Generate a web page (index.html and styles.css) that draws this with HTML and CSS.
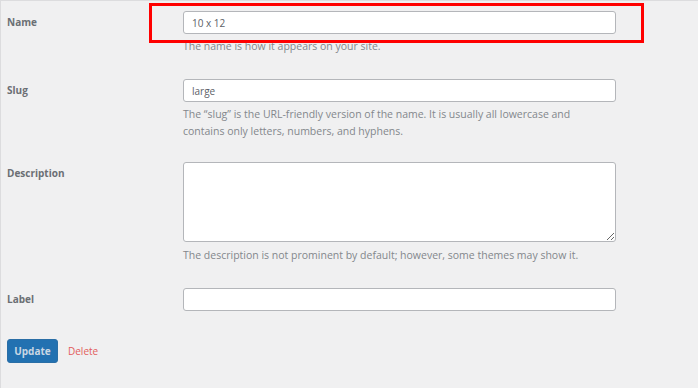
FILE: index.html
```html
<!DOCTYPE html>
<html lang="en">
<head>
  <meta charset="UTF-8" />
  <meta name="viewport" content="width=device-width, initial-scale=1.0" />
  <title>Edit Attribute Term</title>
  <link rel="stylesheet" href="styles.css">
</head>
<body>
  <div class="page">
    <form class="term-form">
      <!-- Name -->
      <div class="form-row">
        <label class="row-label" for="tag-name">Name</label>
        <div class="row-field">
          <input type="text" id="tag-name" value="10 x 12" />
          <p class="help">The name is how it appears on your site.</p>
        </div>
      </div>

      <!-- Slug -->
      <div class="form-row row-slug">
        <label class="row-label" for="tag-slug">Slug</label>
        <div class="row-field">
          <input type="text" id="tag-slug" value="large" />
          <p class="help">The &ldquo;slug&rdquo; is the URL-friendly version of the name. It is usually all lowercase and contains only letters, numbers, and hyphens.</p>
        </div>
      </div>

      <!-- Description -->
      <div class="form-row">
        <label class="row-label" for="tag-desc">Description</label>
        <div class="row-field">
          <textarea id="tag-desc"></textarea>
          <p class="help">The description is not prominent by default; however, some themes may show it.</p>
        </div>
      </div>

      <!-- Label -->
      <div class="form-row row-last">
        <label class="row-label" for="tag-label">Label</label>
        <div class="row-field">
          <input type="text" id="tag-label" value="" />
        </div>
      </div>

      <div class="actions">
        <button type="button" class="btn-update">Update</button>
        <a href="#" class="link-delete">Delete</a>
      </div>
    </form>

    <!-- highlight around the name field -->
    <div class="highlight"></div>
  </div>
</body>
</html>
```

FILE: styles.css
```css
/* Reset & Base */
*, *::before, *::after { box-sizing: border-box; margin: 0; padding: 0; }
html, body { height: 100%; }
body { font-family: 'Open Sans', 'Noto Sans', Arial, sans-serif; font-size: 10px; background: #f0f0f1; color: #50575e; }
a { text-decoration: none; color: inherit; }
button { cursor: pointer; font-family: inherit; }

.page { position: relative; height: 100%; border-top: 1px solid #dcdcde; border-left: 1px solid #dcdcde; }

/* Form layout */
.term-form { padding-top: 10px; }
.form-row { display: flex; margin-bottom: 24px; }
.form-row.row-slug { margin-bottom: 22px; }
.form-row.row-last { margin-bottom: 28px; }
.row-label { width: 182px; padding-left: 6px; line-height: 23px; font-weight: 700; color: #6b6f74; }
.row-field { width: 433px; }

.row-field input,
.row-field textarea {
  display: block;
  width: 100%;
  background: #fff;
  border: 1px solid #b4b6ba;
  border-radius: 3px;
  font-family: inherit;
  font-size: 10px;
  color: #5c6167;
}
.row-field input { height: 23px; padding: 0 8px; }
.row-field textarea { height: 80px; padding: 4px 8px; resize: vertical; }

.help { max-width: 420px; margin-top: 4px; font-size: 10.5px; line-height: 17px; color: #83878c; }
.row-field textarea + .help { margin-top: 5px; }

/* Actions */
.actions { display: flex; align-items: center; gap: 10px; padding-left: 6px; }
.btn-update {
  width: 51px;
  height: 24px;
  background: #2271b1;
  border: 1px solid #2a6ea6;
  border-radius: 3px;
  color: #c9d7e4;
  font-size: 10px;
  font-weight: 700;
}
.link-delete { color: #e25c5c; font-size: 10px; }

/* Red annotation box */
.highlight { position: absolute; left: 148px; top: 2px; width: 495px; height: 40px; border: 3px solid #ff0000; }
```
